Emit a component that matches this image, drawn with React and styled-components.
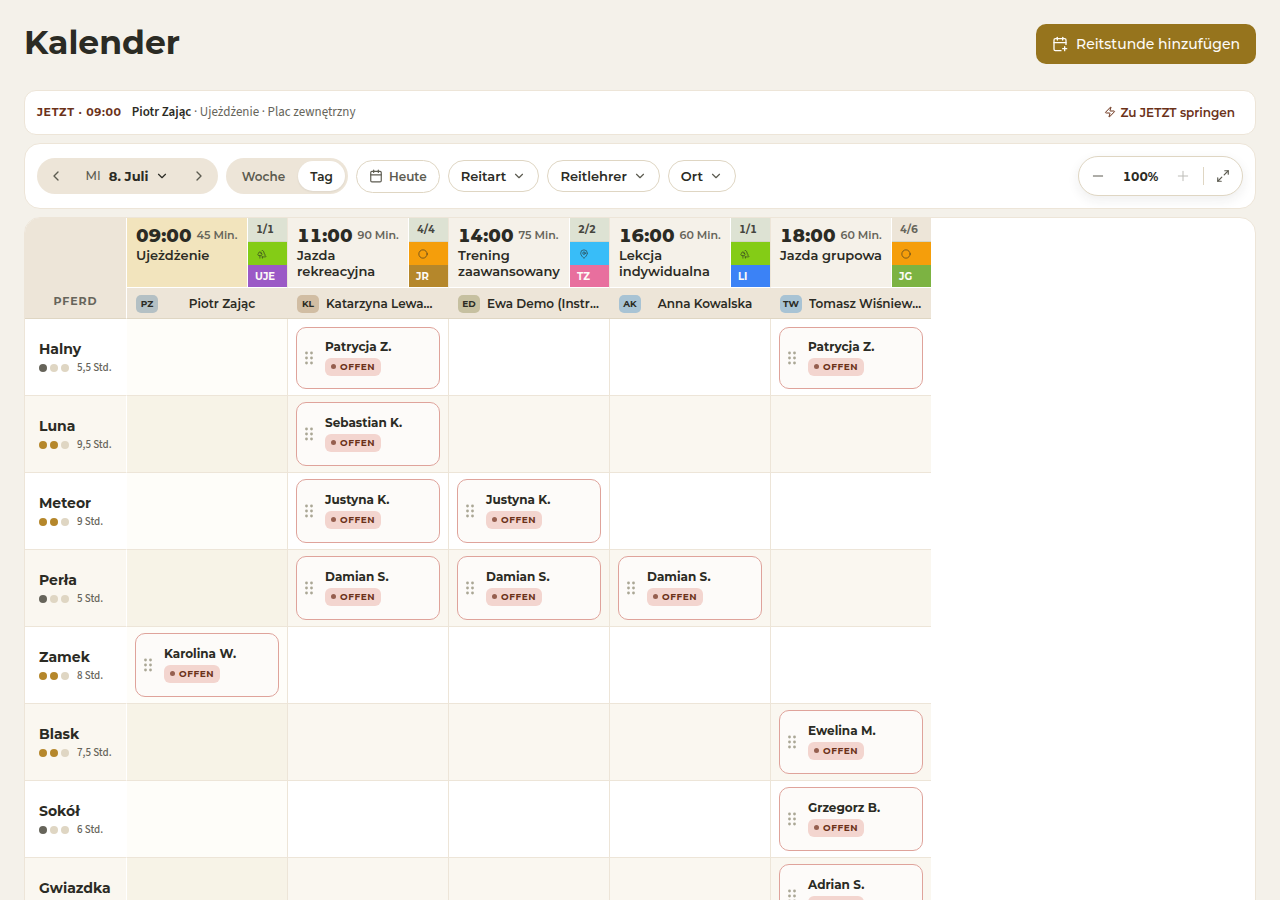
import React from "react";
import styled, { createGlobalStyle } from "styled-components";
import {
  Calendar,
  CalendarPlus,
  ChevronDown,
  ChevronLeft,
  ChevronRight,
  Circle,
  MapPin,
  Maximize2,
  Minus,
  Plus,
  Trees,
  Zap,
} from "lucide-react";

const lessons = [
  {
    time: "09:00",
    length: "45 Min.",
    title: "Ujeżdżenie",
    seats: "1/1",
    full: true,
    place: Trees,
    placeColor: "#84cc16",
    code: "UJE",
    color: "#9b59c6",
    initials: "PZ",
    coach: "Piotr Zając",
    badge: "#b4c0c4",
    now: true,
  },
  {
    time: "11:00",
    length: "90 Min.",
    title: "Jazda rekreacyjna",
    seats: "4/4",
    full: true,
    place: Circle,
    placeColor: "#f59e0b",
    code: "JR",
    color: "#b5872b",
    initials: "KL",
    coach: "Katarzyna Lewandowska",
    badge: "#d1bda3",
  },
  {
    time: "14:00",
    length: "75 Min.",
    title: "Trening zaawansowany",
    seats: "2/2",
    full: true,
    place: MapPin,
    placeColor: "#38bdf8",
    code: "TZ",
    color: "#e86f9e",
    initials: "ED",
    coach: "Ewa Demo (Instruktor)",
    badge: "#c6c0a0",
  },
  {
    time: "16:00",
    length: "60 Min.",
    title: "Lekcja indywidualna",
    seats: "1/1",
    full: true,
    place: Trees,
    placeColor: "#84cc16",
    code: "LI",
    color: "#3b82f6",
    initials: "AK",
    coach: "Anna Kowalska",
    badge: "#a8c3d4",
  },
  {
    time: "18:00",
    length: "60 Min.",
    title: "Jazda grupowa",
    seats: "4/6",
    full: false,
    place: Circle,
    placeColor: "#f59e0b",
    code: "JG",
    color: "#7cb342",
    initials: "TW",
    coach: "Tomasz Wiśniewski",
    badge: "#a8c3d4",
  },
];

const horses = [
  { name: "Halny", load: 1, hours: "5,5 Std.", riders: { 1: "Patrycja Z.", 4: "Patrycja Z." } },
  { name: "Luna", load: 2, hours: "9,5 Std.", riders: { 1: "Sebastian K." } },
  { name: "Meteor", load: 2, hours: "9 Std.", riders: { 1: "Justyna K.", 2: "Justyna K." } },
  {
    name: "Perła",
    load: 1,
    hours: "5 Std.",
    riders: { 1: "Damian S.", 2: "Damian S.", 3: "Damian S." },
  },
  { name: "Zamek", load: 2, hours: "8 Std.", riders: { 0: "Karolina W." } },
  { name: "Blask", load: 2, hours: "7,5 Std.", riders: { 4: "Ewelina M." } },
  { name: "Sokół", load: 1, hours: "6 Std.", riders: { 4: "Grzegorz B." } },
  { name: "Gwiazdka", load: 1, hours: "6 Std.", riders: { 4: "Adrian S." } },
];

const filters = ["Reitart", "Reitlehrer", "Ort"];

const Grip = () => (
  <StyledGrip viewBox="0 0 8 14" aria-hidden="true">
    {[2, 7, 12].map((y) => (
      <React.Fragment key={y}>
        <circle cx="1.5" cy={y} r="1.4" />
        <circle cx="6.5" cy={y} r="1.4" />
      </React.Fragment>
    ))}
  </StyledGrip>
);

const LessonHead = ({ lesson }) => {
  const Place = lesson.place;
  return (
    <StyledLesson scope="col" $now={lesson.now}>
      <StyledLessonInner>
        <StyledLessonText>
          <StyledTimeRow>
            <StyledTime>{lesson.time}</StyledTime>
            <StyledLength>{lesson.length}</StyledLength>
          </StyledTimeRow>
          <StyledLessonTitle>{lesson.title}</StyledLessonTitle>
        </StyledLessonText>
        <StyledTags>
          <StyledSeats $full={lesson.full}>{lesson.seats}</StyledSeats>
          <StyledPlace $color={lesson.placeColor}>
            <Place size={10} strokeWidth={2} />
          </StyledPlace>
          <StyledCode $color={lesson.color}>{lesson.code}</StyledCode>
        </StyledTags>
      </StyledLessonInner>
    </StyledLesson>
  );
};

const Booking = ({ rider }) => (
  <StyledBooking>
    <Grip />
    <StyledBookingText>
      <StyledRider>{rider}</StyledRider>
      <StyledStatus>OFFEN</StyledStatus>
    </StyledBookingText>
  </StyledBooking>
);

const App = () => {
  return (
    <>
      <GlobalStyle />
      <StyledPage>
        <StyledHeader>
          <StyledHeading>Kalender</StyledHeading>
          <StyledAddBtn type="button">
            <CalendarPlus size={16} strokeWidth={2} />
            Reitstunde hinzufügen
          </StyledAddBtn>
        </StyledHeader>

        <StyledNowBar>
          <StyledNowTime>JETZT · 09:00</StyledNowTime>
          <StyledNowInfo>
            <strong>Piotr Zając</strong> · Ujeżdżenie · Plac zewnętrzny
          </StyledNowInfo>
          <StyledJumpBtn type="button">
            <Zap size={12} strokeWidth={2} />
            Zu JETZT springen
          </StyledJumpBtn>
        </StyledNowBar>

        <StyledToolbar>
          <StyledDateNav>
            <StyledArrowBtn type="button" aria-label="Zurück">
              <ChevronLeft size={16} />
            </StyledArrowBtn>
            <StyledDateBtn type="button">
              <span>MI</span>
              <strong>8. Juli</strong>
              <ChevronDown size={14} />
            </StyledDateBtn>
            <StyledArrowBtn type="button" aria-label="Weiter">
              <ChevronRight size={16} />
            </StyledArrowBtn>
          </StyledDateNav>
          <StyledSwitch>
            <StyledSwitchBtn type="button">Woche</StyledSwitchBtn>
            <StyledSwitchBtn type="button" $active>
              Tag
            </StyledSwitchBtn>
          </StyledSwitch>
          <StyledTodayBtn type="button">
            <Calendar size={14} />
            Heute
          </StyledTodayBtn>
          {filters.map((filter) => (
            <StyledFilterBtn type="button" key={filter}>
              {filter}
              <ChevronDown size={14} />
            </StyledFilterBtn>
          ))}
          <StyledZoom>
            <StyledZoomBtn type="button" aria-label="Verkleinern">
              <Minus size={16} strokeWidth={1.5} />
            </StyledZoomBtn>
            <StyledZoomValue>100%</StyledZoomValue>
            <StyledZoomBtn type="button" aria-label="Vergrößern" disabled>
              <Plus size={16} strokeWidth={1.5} />
            </StyledZoomBtn>
            <StyledDivider />
            <StyledZoomBtn type="button" aria-label="Vollbild">
              <Maximize2 size={14} />
            </StyledZoomBtn>
          </StyledZoom>
        </StyledToolbar>

        <StyledBoard>
          <StyledTable>
            <colgroup>
              <StyledCol $width={102} />
              {lessons.map((lesson, i) => (
                <StyledCol key={lesson.time} $width={i === lessons.length - 1 ? 160 : 161} />
              ))}
            </colgroup>
            <thead>
              <tr>
                <StyledCorner scope="col" rowSpan={2}>
                  PFERD
                </StyledCorner>
                {lessons.map((lesson) => (
                  <LessonHead key={lesson.time} lesson={lesson} />
                ))}
              </tr>
              <tr>
                {lessons.map((lesson) => (
                  <StyledCoachCell key={lesson.time}>
                    <StyledCoach>
                      <StyledInitials $color={lesson.badge}>{lesson.initials}</StyledInitials>
                      <StyledCoachName>{lesson.coach}</StyledCoachName>
                    </StyledCoach>
                  </StyledCoachCell>
                ))}
              </tr>
            </thead>
            <tbody>
              {horses.map((horse) => (
                <StyledRow key={horse.name}>
                  <StyledHorse scope="row">
                    <StyledHorseName>{horse.name}</StyledHorseName>
                    <StyledLoad>
                      {[0, 1, 2].map((dot) => (
                        <StyledDot key={dot} $on={dot < horse.load} $load={horse.load} />
                      ))}
                      <StyledHours>{horse.hours}</StyledHours>
                    </StyledLoad>
                  </StyledHorse>
                  {lessons.map((lesson, i) => (
                    <StyledSlot key={lesson.time} $now={lesson.now}>
                      {horse.riders[i] && <Booking rider={horse.riders[i]} />}
                    </StyledSlot>
                  ))}
                </StyledRow>
              ))}
            </tbody>
          </StyledTable>
        </StyledBoard>
      </StyledPage>
    </>
  );
};

const bodyFont = `"Source Sans 3", "Source Sans Pro", "Noto Sans CJK SC", "Noto Sans", sans-serif`;

const GlobalStyle = createGlobalStyle`
  * {
    box-sizing: border-box;
  }
  html {
    scrollbar-width: none;
  }
  body {
    margin: 0;
    background: #f4f1ea;
    color: #2b2b24;
    font-family: "Montserrat", "Inter", sans-serif;
  }
  button {
    font-family: inherit;
    color: inherit;
    border: none;
    background: none;
    padding: 0;
    cursor: pointer;
  }
  svg {
    flex-shrink: 0;
  }
`;

const StyledPage = styled.main`
  padding: 24px;
`;

const StyledHeader = styled.header`
  display: flex;
  justify-content: space-between;
  align-items: flex-start;
  height: 66px;
`;

const StyledHeading = styled.h1`
  margin: 0;
  font-size: 33px;
  line-height: 36px;
  font-weight: 700;
`;

const StyledAddBtn = styled.button`
  display: flex;
  align-items: center;
  gap: 8px;
  height: 40px;
  padding: 0 16px;
  border-radius: 10px;
  background: #96741d;
  color: #fdfbf7;
  font-size: 14px;
  font-weight: 500;
`;

const StyledNowBar = styled.section`
  display: flex;
  align-items: center;
  gap: 10px;
  height: 45px;
  margin-bottom: 8px;
  padding: 0 20px 1px 12px;
  border: 1px solid #ede5d8;
  border-radius: 12px;
  background: #fff;
`;

const StyledNowTime = styled.span`
  color: #6b3219;
  font-size: 11px;
  font-weight: 700;
  letter-spacing: 0.06em;
`;

const StyledNowInfo = styled.span`
  flex: 1;
  color: #66645a;
  font-family: ${bodyFont};
  font-size: 13px;
  line-height: 18px;

  strong {
    color: #2b2b24;
    font-weight: 600;
  }
`;

const StyledJumpBtn = styled.button`
  display: flex;
  align-items: center;
  gap: 4px;
  color: #6b3219;
  font-size: 12px;
  font-weight: 600;
`;

const StyledToolbar = styled.section`
  display: flex;
  align-items: center;
  gap: 8px;
  height: 66px;
  margin-bottom: 8px;
  padding: 0 12px;
  border: 1px solid #ede5d8;
  border-radius: 16px;
  background: #fff;
`;

const StyledDateNav = styled.div`
  display: flex;
  align-items: center;
  justify-content: space-between;
  width: 181px;
  height: 36px;
  border-radius: 18px;
  background: #ede5d8;
`;

const StyledArrowBtn = styled.button`
  display: grid;
  place-items: center;
  width: 38px;
  height: 36px;
  color: #5c5b50;
`;

const StyledDateBtn = styled.button`
  display: flex;
  align-items: center;
  gap: 7px;

  span {
    padding: 0 1px 1px 0;
    color: #5c5b50;
    font-size: 12px;
    font-weight: 500;
  }

  strong {
    font-size: 13px;
    font-weight: 700;
  }
`;

const StyledSwitch = styled.div`
  display: flex;
  align-items: center;
  justify-content: space-between;
  width: 122px;
  height: 36px;
  padding: 3px;
  border-radius: 18px;
  background: #ede5d8;
`;

const StyledSwitchBtn = styled.button`
  flex: ${({ $active }) => ($active ? "0 0 47px" : "1")};
  height: 30px;
  border-radius: 15px;
  background: ${({ $active }) => ($active ? "#fff" : "transparent")};
  box-shadow: ${({ $active }) => ($active ? "0 1px 2px rgba(43, 43, 36, 0.08)" : "none")};
  color: ${({ $active }) => ($active ? "#2b2b24" : "#5c5b50")};
  font-size: 12px;
  font-weight: 600;
`;

const StyledPill = styled.button`
  display: flex;
  align-items: center;
  border: 1px solid #dfd6c3;
  border-radius: 17px;
  background: #fff;
`;

const StyledTodayBtn = styled(StyledPill)`
  gap: 6px;
  height: 33px;
  padding: 0 12px;
  color: #5c5b50;
  font-size: 12px;
  font-weight: 600;
`;

const StyledFilterBtn = styled(StyledPill)`
  gap: 6px;
  height: 32px;
  padding: 0 12px;
  font-size: 13px;
  font-weight: 600;

  svg {
    color: #5c5b50;
  }
`;

const StyledZoom = styled.div`
  display: flex;
  align-items: center;
  justify-content: space-between;
  width: 165px;
  height: 40px;
  margin-left: auto;
  padding: 0 5px;
  border: 1px solid #dfd6c3;
  border-radius: 20px;
  background: #fff;
  box-shadow: 0 4px 12px rgba(43, 43, 38, 0.08);
`;

const StyledZoomBtn = styled.button`
  display: grid;
  place-items: center;
  width: 28px;
  height: 28px;
  color: #5c5b50;

  &:disabled {
    opacity: 0.4;
  }
`;

const StyledZoomValue = styled.span`
  width: 46px;
  text-align: center;
  font-size: 12px;
  font-weight: 700;
  font-variant-numeric: tabular-nums;
`;

const StyledDivider = styled.span`
  width: 1px;
  height: 18px;
  background: #dfd6c3;
`;

const StyledBoard = styled.section`
  overflow: hidden;
  border: 1px solid #ede5d8;
  border-radius: 16px;
  background: #fff;
`;

const StyledTable = styled.table`
  width: 906px;
  table-layout: fixed;
  border-collapse: separate;
  border-spacing: 0;
`;

const StyledCol = styled.col`
  width: ${({ $width }) => $width}px;
`;

const StyledCorner = styled.th`
  padding: 0 0 10px;
  border-right: 1px solid #fff;
  border-bottom: 1px solid #dfd6c3;
  background: #ede5d8;
  color: #66645a;
  font-size: 11px;
  line-height: 14px;
  font-weight: 700;
  letter-spacing: 0.08em;
  vertical-align: bottom;
`;

const StyledLesson = styled.th`
  height: 70px;
  padding: 0;
  border-right: 1px solid #ede5d8;
  border-bottom: 1px solid #fff;
  background: ${({ $now }) => ($now ? "#f2e4bd" : "#f5f1e9")};
  text-align: left;

  &:last-child {
    border-right: none;
  }
`;

const StyledLessonInner = styled.div`
  display: flex;
  height: 69px;
`;

const StyledLessonText = styled.div`
  flex: 1;
  min-width: 0;
  padding: 7px 0 0 9px;
  border-right: 1px solid #fff;
`;

const StyledTimeRow = styled.div`
  display: flex;
  align-items: center;
  gap: 5px;
  height: 22px;
  line-height: 20px;
  white-space: nowrap;
`;

const StyledTime = styled.span`
  font-size: 18px;
  font-weight: 800;
  font-variant-numeric: tabular-nums;
`;

const StyledLength = styled.span`
  padding-bottom: 3px;
  color: #66645a;
  font-size: 11px;
  line-height: 16px;
  font-weight: 600;
`;

const StyledLessonTitle = styled.div`
  font-size: 13px;
  line-height: 16px;
  font-weight: 600;
`;

const StyledTags = styled.div`
  display: grid;
  grid-template-rows: 24px 23px 22px;
  width: 39px;
`;

const StyledTag = styled.div`
  display: flex;
  align-items: center;
  padding-left: 7px;
  font-size: 10px;
  font-weight: 700;
`;

const StyledSeats = styled(StyledTag)`
  padding-left: 8px;
  border-bottom: 1px solid #d3d5c5;
  background: ${({ $full }) => ($full ? "#dde2d3" : "#ede5d8")};
  color: ${({ $full }) => ($full ? "#45453e" : "#66645a")};
  font-variant-numeric: tabular-nums;
`;

const StyledPlace = styled(StyledTag)`
  padding-left: 9px;
  background: ${({ $color }) => $color};
  color: rgba(43, 43, 38, 0.7);
`;

const StyledCode = styled(StyledTag)`
  background: ${({ $color }) => $color};
  color: #fdfbf7;
`;

const StyledCoachCell = styled.td`
  height: 31px;
  padding: 1px 9px 0;
  border-bottom: 1px solid #dfd6c3;
  background: #ede5d8;
`;

const StyledCoach = styled.div`
  display: flex;
  align-items: center;
  gap: 7px;
`;

const StyledInitials = styled.span`
  flex: 0 0 22px;
  height: 18px;
  border-radius: 5px;
  background: ${({ $color }) => $color};
  font-size: 9px;
  line-height: 18px;
  font-weight: 700;
  text-align: center;
`;

const StyledCoachName = styled.span`
  flex: 1;
  overflow: hidden;
  font-size: 12px;
  line-height: 18px;
  font-weight: 600;
  text-align: center;
  text-overflow: ellipsis;
  white-space: nowrap;
`;

const StyledHorse = styled.th`
  height: 77px;
  padding: 4px 0 0 14px;
  border-right: 1px solid #fff;
  border-bottom: 1px solid #ede5d8;
  text-align: left;
`;

const StyledSlot = styled.td`
  height: 77px;
  padding: 0 8px;
  border-right: 1px solid #ede5d8;
  border-bottom: 1px solid #ede5d8;
  background: ${({ $now }) => ($now ? "#fefdf9" : "transparent")};

  &:last-child {
    border-right: none;
  }
`;

const StyledHorseName = styled.div`
  font-size: 14px;
  line-height: 18px;
  font-weight: 700;
`;

const StyledLoad = styled.div`
  display: flex;
  align-items: center;
  gap: 3px;
  height: 20px;
`;

const StyledDot = styled.span`
  width: 8px;
  height: 8px;
  border-radius: 50%;
  background: ${({ $on, $load }) => {
    if (!$on) return "#dfd6c3";
    return $load === 1 ? "#66645a" : "#b5872b";
  }};
`;

const StyledHours = styled.span`
  margin-left: 5px;
  color: #66645a;
  font-family: ${bodyFont};
  font-size: 11px;
  line-height: 14px;
  font-weight: 500;
`;

const StyledBooking = styled.div`
  display: flex;
  align-items: center;
  gap: 12px;
  height: 64px;
  padding-left: 8px;
  border: 1px solid #dfa39b;
  border-radius: 10px;
  background: #fdfbf9;
`;

const StyledRow = styled.tr`
  &:nth-child(even) {
    background: #faf7f0;
  }

  &:nth-child(even) ${StyledSlot}:nth-child(2) {
    background: #f7f3e7;
  }

  /* the row under the header keeps extra room above its bookings */
  &:first-child ${StyledSlot} {
    padding-top: 2px;
  }

  &:first-child ${StyledBooking} {
    height: 62px;
  }
`;

const StyledGrip = styled.svg`
  width: 8px;
  height: 14px;
  fill: #aaa795;
`;

const StyledBookingText = styled.div`
  display: flex;
  flex-direction: column;
  align-items: flex-start;
  gap: 3px;
  padding-bottom: 2px;
`;

const StyledRider = styled.span`
  font-size: 12px;
  line-height: 16px;
  font-weight: 700;
`;

const StyledStatus = styled.span`
  display: flex;
  align-items: center;
  gap: 4px;
  height: 18px;
  padding: 0 6px;
  border-radius: 6px;
  background: #f3d5cf;
  color: #6b3219;
  font-size: 9px;
  font-weight: 700;
  letter-spacing: 0.06em;

  &::before {
    content: "";
    width: 5px;
    height: 5px;
    border-radius: 50%;
    background: #965f4f;
  }
`;

export default App;
